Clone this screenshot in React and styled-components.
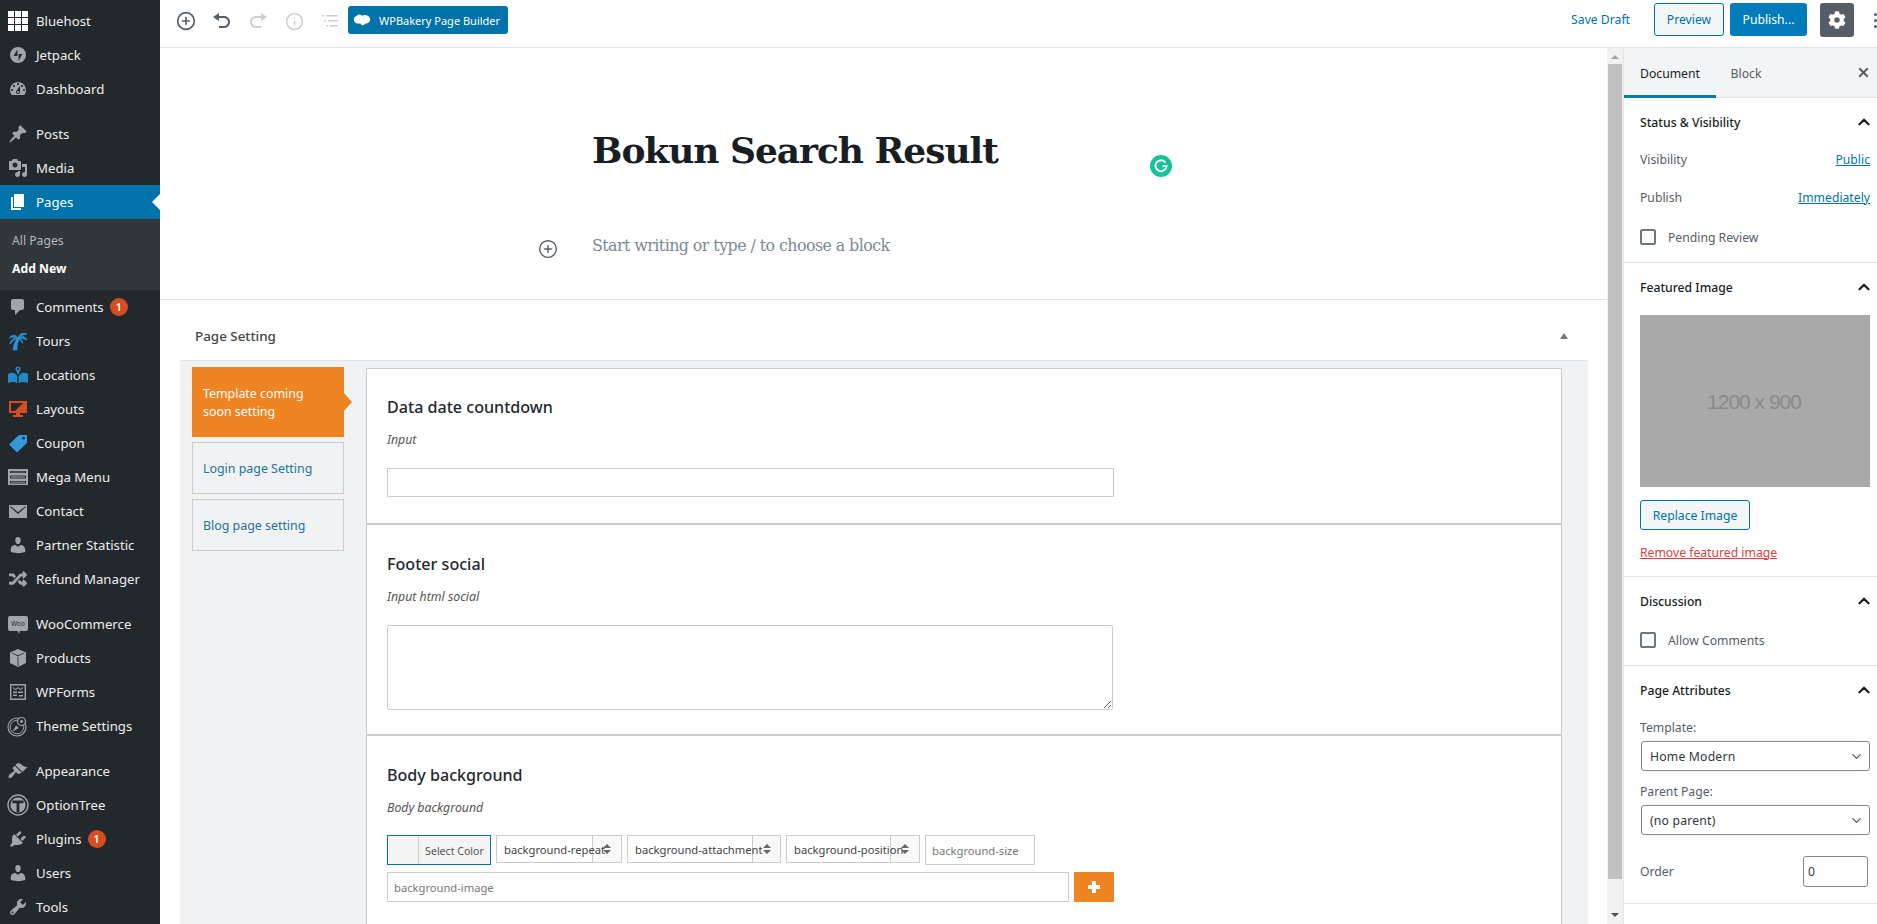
import React from "react";
import styled, { createGlobalStyle } from "styled-components";
import { CirclePlus, ChevronUp, ChevronDown, X, Info } from "lucide-react";
import { FaCog, FaRandom } from "react-icons/fa";

const Global = createGlobalStyle`
  html, body { margin: 0; padding: 0; height: 100%; overflow: hidden; background: #fff; }
  body { font-family: "Noto Sans", "Open Sans", sans-serif; font-size: 13px; color: #191e23; }
  * { box-sizing: border-box; }
`;

const Page = styled.div`display: flex; width: 1877px; height: 924px; overflow: hidden;`;
const Side = styled.nav`width: 160px; flex: none; background: #23282d; padding-top: 4px; display: flex; flex-direction: column;`;
const MenuItem = styled.div`
  position: relative; display: flex; align-items: center; gap: 8px; height: 34px; padding-left: 8px; flex: none;
  color: ${p => (p.$active ? "#fff" : "#eee")}; background: ${p => (p.$active ? "#0073aa" : "transparent")};
  font-size: 13.2px; margin-top: ${p => (p.$gap ? "11px" : "0")};
  ${p => p.$active && `&::after { content: ""; position: absolute; right: 0; top: 9px; border: 8px solid transparent; border-right-color: #fff; border-left-width: 0; }`}
`;
const MenuIcon = styled.svg`width: ${p => p.$size || 20}px; height: ${p => p.$size || 20}px; margin: 0 ${p => (p.$size ? (20 - p.$size) / 2 : 0)}px; flex: none; fill: ${p => p.$color || "#a0a5aa"}; stroke: ${p => p.$line || "none"}; stroke-width: ${p => (p.$line ? 0.7 : 0)}; display: block;`;
const Badge = styled.span`
  width: 18px; height: 18px; border-radius: 50%; background: #d54e21; color: #fff; font-size: 10.5px; font-weight: 600;
  display: flex; align-items: center; justify-content: center; margin-left: -2px;
`;
const SubMenu = styled.div`height: 71px; flex: none; background: #32373c; padding: 7px 0 0 12px;`;
const SubItem = styled.div`height: 28px; display: flex; align-items: center; font-size: 12.2px; color: ${p => (p.$strong ? "#fff" : "#b4b9be")}; font-weight: ${p => (p.$strong ? 700 : 400)};`;

const Main = styled.div`flex: 1; min-width: 0; display: flex; flex-direction: column;`;
const Top = styled.header`height: 48px; flex: none; border-bottom: 1px solid #e2e4e7; display: flex; align-items: flex-start; padding-left: 8px;`;
const ToolIcon = styled.span`
  width: 36px; height: 42px; flex: none; display: flex; align-items: center; justify-content: center;
  color: ${p => (p.$off ? "#ccd0d4" : "#555d66")};
`;
const Bakery = styled.div`
  margin: 6px 0 0 0; width: 160px; height: 28px; border-radius: 3px; background: #0073aa; color: #fff; font-size: 11px;
  display: flex; align-items: center; gap: 8px; padding-left: 5px;
`;
const TopRight = styled.div`margin-left: auto; display: flex; align-items: flex-start; padding-top: 3px; overflow: hidden;`;
const SaveDraft = styled.span`color: #0073aa; font-size: 12.2px; height: 33px; display: flex; align-items: center; margin-right: 24px;`;
const OutlineBtn = styled.div`
  display: flex; align-items: center; justify-content: center; height: ${p => p.$h || 33}px; width: ${p => p.$w}px; margin-top: ${p => p.$mt || 0}px;
  border: 1px solid #0073aa; border-radius: 3px; background: #f3f5f6; color: #0073aa; font-size: 12.2px;
`;
const PrimaryBtn = styled.div`
  display: flex; align-items: center; justify-content: center; width: 77px; height: 33px; margin: 0 13px 0 6px;
  border-radius: 3px; background: #007cba; color: #fff; font-size: 12.2px;
`;
const GearBtn = styled.div`width: 34px; height: 34px; border-radius: 3px; background: #555d66; color: #fff; display: flex; align-items: center; justify-content: center;`;
const Dots = styled.div`width: 23px; height: 34px; flex: none; display: flex; flex-direction: column; justify-content: center; gap: 3px; padding-left: 20px;`;
const Dot = styled.i`display: block; width: 3px; height: 3px; border-radius: 50%; background: #555d66;`;

const Work = styled.div`flex: 1; min-height: 0; display: flex;`;
const Editor = styled.main`flex: 1; min-width: 0; display: flex; flex-direction: column; overflow: hidden;`;
const TitleArea = styled.section`position: relative; height: 252px; flex: none; border-bottom: 1px solid #e2e4e7; padding: 77px 0 0 378px;`;
const Title = styled.h1`margin: 0 0 0 54px; font: 700 36px/50px "DejaVu Serif", serif; letter-spacing: -1.05px; color: #191e23; white-space: nowrap;`;
const Grammarly = styled.span`
  position: absolute; left: 990px; top: 107px; width: 22px; height: 22px; border-radius: 50%; background: #15c39a; color: #fff;
  display: flex; align-items: center; justify-content: center;
`;
const BlockRow = styled.div`display: flex; align-items: center; gap: 34px; margin-top: 58px; color: #555d66;`;
const Inserter = styled.span`display: flex; margin-top: 6px;`;
const Placeholder = styled.span`font: 400 15.9px/24px "DejaVu Serif", serif; letter-spacing: -.58px; color: #7e8993; white-space: nowrap;`;

const Meta = styled.section`margin: 0 19px 0 20px; display: flex; flex-direction: column; flex: 1; min-height: 0;`;
const MetaHead = styled.div`height: 60px; flex: none; display: flex; align-items: center; justify-content: space-between; padding: 11px 20px 0 15px; font-size: 13.4px; font-weight: 500; color: #444;`;
const Caret = styled.i`width: 0; height: 0; border: 4px solid transparent; border-top: 0; border-bottom: 6px solid #72777c;`;
const MetaBody = styled.div`flex: 1; min-height: 0; overflow: hidden; background: #f1f2f4; border-top: 1px solid #e2e4e7; display: flex; padding: 6px 26px 0 12px; gap: 22px;`;
const Tabs = styled.div`width: 152px; flex: none; display: flex; flex-direction: column; gap: 5px;`;
const TabItem = styled.div`
  position: relative; height: ${p => (p.$active ? "70px" : "52px")}; display: flex; align-items: center; padding: 2px 10px 0 ${p => (p.$active ? 11 : 10)}px; line-height: 18px; font-size: 12.4px;
  color: ${p => (p.$active ? "#fff" : "#21759b")}; background: ${p => (p.$active ? "#ef8422" : "transparent")};
  border: ${p => (p.$active ? "none" : "1px solid #ccc")};
  ${p => p.$active && `&::after { content: ""; position: absolute; left: 100%; top: 26px; border: 9px solid transparent; border-left: 8px solid #ef8422; border-right: 0; }`}
`;
const Fields = styled.div`flex: 1; min-width: 0; padding-top: 1px;`;
const Field = styled.div`background: #fff; border: 1px solid #ccc; padding: ${p => p.$pt}px 19px ${p => p.$pb}px 20px;`;
const FieldTitle = styled.h3`margin: 0; font-size: 16.1px; line-height: 22px; font-weight: 500; color: #23282d;`;
const FieldDesc = styled.p`margin: 13px 0 0; font-size: 12.3px; line-height: 18px; font-style: italic; color: #555;`;
const TextInput = styled.input`display: block; margin-top: 19px; width: 727px; height: 29px; border: 1px solid #ccc; background: #fff; padding: 0 5px;`;
const TextBox = styled.textarea`display: block; margin-top: 19px; width: 726px; height: 85px; border: 1px solid #ccc; border-radius: 2px; background: #fff; resize: both;`;
const BgRow = styled.div`display: flex; margin-top: ${p => p.$mt}px; gap: ${p => p.$gap}px; height: 30px;`;
const ColorPick = styled.div`width: 104px; border: 1px solid #0073aa; background: #f4f4f5; display: flex; font-size: 10.6px; color: #555;`;
const Swatch = styled.span`width: 31px; border-right: 1px solid #ccc;`;
const ColorLabel = styled.span`flex: 1; display: flex; align-items: center; justify-content: center; padding-top: 2px;`;
const FakeSelect = styled.div`
  position: relative; width: ${p => p.$w}px; height: 28px; border: 1px solid #ccc; background: #fff; font-size: 11.2px; color: #444;
  display: flex; align-items: center; padding-left: 7px; white-space: nowrap; overflow: hidden;
`;
const SelectText = styled.span`position: relative; z-index: 1;`;
const SelectEnd = styled.span`
  position: absolute; right: 0; top: 0; bottom: 0; width: ${p => p.$w}px; border-left: 1px solid #ccc; background: #f9f9f9;
  display: flex; align-items: center; padding-left: 10px;
`;
const Arrows = styled.svg`position: relative; z-index: 2; width: 8px; height: 10px; fill: #666; flex: none;`;
const BgInput = styled.input`
  width: ${p => p.$w}px; height: 30px; border: 1px solid #ccc; background: #fff; padding: 0 6px; font: 11.2px "Noto Sans", sans-serif;
  &::placeholder { color: #777; opacity: 1; }
`;
const AddBtn = styled.div`width: 40px; height: 30px; background: #ef8422; color: #fff; display: flex; align-items: center; justify-content: center;`;

const Scroll = styled.div`width: 16px; flex: none; background: #f1f1f1; display: flex; flex-direction: column; align-items: center;`;
const ScrollArrow = styled.i`
  flex: none; width: 0; height: 0; margin: ${p => p.$m}; border: 4px solid transparent;
  ${p => (p.$up ? "border-top: 0; border-bottom: 4px solid #a3a3a3;" : "border-bottom: 0; border-top: 4px solid #505050;")}
`;
const Thumb = styled.div`width: 14px; height: 815px; background: #c1c1c1; flex: none;`;

const Panel = styled.aside`width: 254px; flex: none; border-left: 1px solid #e2e4e7; overflow: hidden;`;
const PanelTabs = styled.div`height: 50px; background: #f3f4f5; border-bottom: 1px solid #e2e4e7; display: flex; align-items: stretch; padding-right: 6px;`;
const PanelTab = styled.div`
  width: ${p => p.$w}px; display: flex; align-items: center; justify-content: center; font-size: 12.2px; padding-top: 4px;
  color: ${p => (p.$active ? "#191e23" : "#555d66")}; margin-bottom: -1px;
  border-bottom: 3px solid ${p => (p.$active ? "#007cba" : "transparent")};
`;
const CloseWrap = styled.span`margin-left: auto; display: flex; align-items: center; color: #555d66;`;
const Sec = styled.section`padding: 13px 7px ${p => p.$pb}px 16px; border-bottom: 1px solid #e2e4e7;`;
const SecHead = styled.div`height: 22px; display: flex; align-items: center; justify-content: space-between; font-size: 12.2px; font-weight: 500; color: #191e23;`;
const Toggle = styled(ChevronUp)`margin-right: -3px;`;
const Row = styled.div`display: flex; align-items: center; justify-content: space-between; height: 20px; margin-top: ${p => p.$mt}px; font-size: 12.2px; color: #555d66;`;
const Link = styled.a`color: #0073aa; text-decoration: underline;`;
const CheckRow = styled.label`display: flex; align-items: center; gap: 12px; height: 20px; margin-top: ${p => p.$mt}px; font-size: 12.2px; color: #555d66;`;
const Check = styled.span`width: 16px; height: 16px; border: 2px solid #6c7781; border-radius: 2px; background: #fff; flex: none;`;
const Thumbnail = styled.div`
  margin-top: 17px; height: 172px; background: #a9a9a9; color: #8a8a8a; display: flex; align-items: center; justify-content: center;
  font: 21px "Liberation Sans", sans-serif; letter-spacing: -1px; padding: 2px 2px 0 0;
`;
const RemoveRow = styled.div`margin-top: 12px; height: 20px; display: flex; align-items: center; font-size: 12.2px;`;
const RemoveLink = styled.a`color: #dc4040; text-decoration: underline;`;
const Label = styled.div`height: 20px; margin-top: ${p => p.$mt}px; display: flex; align-items: center; font-size: 12.2px; color: #555d66;`;
const PanelSelect = styled.div`
  margin: 4px 0 0 1px; height: 30px; border: 1px solid #7e8993; border-radius: 3px; display: flex; align-items: center; justify-content: space-between;
  padding: 0 5px 0 8px; font-size: 12.2px; color: #32373c; letter-spacing: .2px;
`;
const OrderRow = styled.div`display: flex; align-items: center; justify-content: space-between; height: 31px; margin-top: 21px; padding-right: 2px; font-size: 12.2px; color: #555d66;`;
const OrderInput = styled.div`width: 65px; height: 31px; border: 1px solid #7e8993; border-radius: 3px; display: flex; align-items: center; padding-left: 4px; color: #32373c;`;

const Icon = ({ d, color, rule, line }) => (
  <MenuIcon viewBox="0 0 20 20" $color={color} $line={line}>
    <path d={d} fillRule={rule} />
  </MenuIcon>
);

const Grid = () => (
  <MenuIcon viewBox="0 0 20 20" $color="#fff">
    {[0, 7, 14].flatMap(y => [0, 7, 14].map(x => <rect key={`${x}-${y}`} x={x} y={y} width="6" height="6" />))}
  </MenuIcon>
);
const Jetpack = () => (
  <Icon rule="evenodd" d="M10 2a8 8 0 1 1 0 16a8 8 0 0 1 0-16zM9.5 4.2L5.6 11h3.9zM10.6 9v6.8L14.4 9z" />
);
const Palm = () => (
  <Icon color="#2b93d8" line="#2b93d8" d="M5 19C5.500 14 7 10 9.500 7L11.500 8C9.500 11 8.800 15 9 19ZM10 7C7.500 3 3.500 3.500 1.500 7C4 5.800 7 5.800 10 7ZM10 7C6 6.500 2.500 9 2 13C4 10 7 8 10 7ZM10 7C11 3 15 1 19 3C15 3.500 12.500 5 10 7ZM10 7C13 4.500 17.500 5 19 9C16 7.500 13 7 10 7ZM10 7C13 7.500 15 9.500 14.500 12.500C13.500 10 12 8.500 10 7Z" />
);
const Loc = () => (
  <Icon color="#2288c8" rule="evenodd" d="M10 1.500a2.600 2.600 0 0 1 2.600 2.600c0 1.600-1.600 3.200-2 5.200h-1.200c-.4-2-2-3.600-2-5.200A2.600 2.600 0 0 1 10 1.500zM10 3.100a1 1 0 1 0 0 2a1 1 0 0 0 0-2zM0 9C2.500 7.500 5 7.500 7 8.500L9.300 11V18C7 16.500 3 16.500 0 18ZM20 9C17.500 7.500 15 7.500 13 8.500L10.700 11V18C13 16.500 17 16.500 20 18Z" />
);
const Screen = () => (
  <Icon color="#d54e21" rule="evenodd" d="M1 2H19V14H12V16H15V18H5V16H8V14H1ZM3 4V12H7L15 4Z" />
);
const Tag = () => (
  <Icon color="#3498db" rule="evenodd" d="M11 2H19V10L9 19.500L1 11.500ZM15.500 3.800a1.400 1.400 0 1 0 0 2.800a1.400 1.400 0 0 0 0-2.800Z" />
);
const Mega = () => (
  <MenuIcon viewBox="0 0 20 20">
    <path fillRule="evenodd" d="M0 2H20V18H0ZM2 4V6H18V4ZM2 8.500V11.500H18V8.500ZM2 14V16.500H18V14Z" />
    <path d="M3 4.500H17V5.500H3ZM3 9H17V11H3ZM3 14.500H17V16H3Z" opacity=".55" />
  </MenuIcon>
);
const Mail = () => (
  <Icon rule="evenodd" d="M1 4H19V17H1ZM2.600 5.200L10 11.200L17.400 5.200L18 6L10 13L2 6Z" />
);
const WooIcon = () => (
  <MenuIcon viewBox="0 0 20 20">
    <rect x="0" y="2" width="20" height="15" rx="2" />
    <path d="M9 16L11 20L12 16Z" />
    <text x="10" y="12" fontSize="6.400" textAnchor="middle" fill="#23282d" fontFamily="Noto Sans">Woo</text>
  </MenuIcon>
);
const Box = () => (
  <Icon rule="evenodd" d="M10 1L18 4.500V15L10 19L2 15V4.500ZM3.600 5.200L10 8.200L16.400 5.200L16 4.800L10 7.300L4 4.800ZM9.600 8.800V18H10.400V8.800Z" />
);
const Forms = () => (
  <MenuIcon viewBox="0 0 20 20">
    <path fillRule="evenodd" d="M2 2H18V18H2ZM3.400 3.400V16.600H16.600V3.400Z" />
    <path d="M5 5L7.500 7L10 5L12.500 7L15 5V6.200L12.500 8.200L10 6.200L7.500 8.200L5 6.200ZM5 9.500H9V11H5ZM10 9.500H15V11H10ZM5 12.500H9V14H5ZM11 13H15V14.500H11Z" />
  </MenuIcon>
);
const Compass = () => (
  <MenuIcon viewBox="0 0 22 22" $size={22}>
    <circle cx="10" cy="12" r="9" fill="none" stroke="#a0a5aa" strokeWidth="1.200" />
    <circle cx="10" cy="12" r="6.800" fill="none" stroke="#a0a5aa" strokeWidth="1" />
    <path d="M5.500 16.500L9 10.500L12 13Z" />
    <circle cx="14.500" cy="6.500" r="4" fill="#23282d" stroke="#a0a5aa" strokeWidth="1.200" />
    <circle cx="14.500" cy="6.500" r="1.400" />
  </MenuIcon>
);
const Tree = () => (
  <MenuIcon viewBox="0 0 22 22" $size={22}>
    <circle cx="11" cy="11" r="10" fill="none" stroke="#a0a5aa" strokeWidth="1.400" />
    <circle cx="11" cy="11" r="7.600" />
    <path d="M5.500 6.500H16.500V9.200H12.400V18H9.600V9.200H5.500Z" fill="#23282d" />
  </MenuIcon>
);

const dash = {
  dashboard: "M3.76 16h12.48c1.1-1.37 1.76-3.11 1.76-5 0-4.42-3.58-8-8-8s-8 3.58-8 8c0 1.89.66 3.63 1.76 5zM10 4c.55 0 1 .45 1 1s-.45 1-1 1-1-.45-1-1 .45-1 1-1zM6 6c.55 0 1 .45 1 1s-.45 1-1 1-1-.45-1-1 .45-1 1-1zm8 0c.55 0 1 .45 1 1s-.45 1-1 1-1-.45-1-1 .45-1 1-1zm-5.37 5.55L12 7v6c0 1.1-.9 2-2 2s-2-.9-2-2c0-.57.24-1.08.63-1.45zM4 10c.55 0 1 .45 1 1s-.45 1-1 1-1-.45-1-1 .45-1 1-1zm12 0c.55 0 1 .45 1 1s-.45 1-1 1-1-.45-1-1 .45-1 1-1zm-5 3c0-.55-.45-1-1-1s-1 .45-1 1 .45 1 1 1 1-.45 1-1z",
  post: "M10.44 3.02l1.82-1.82 6.36 6.35-1.83 1.82c-1.05-.68-2.48-.57-3.41.36l-.75.75c-.92.93-1.04 2.35-.35 3.41l-1.83 1.82-2.41-2.41-2.8 2.79c-.42.42-3.38 2.71-3.8 2.29s1.86-3.39 2.28-3.81l2.79-2.79L4.1 9.36l1.83-1.82c1.05.69 2.48.57 3.4-.36l.75-.75c.93-.92 1.05-2.35.36-3.41z",
  media: "M13 11V4c0-.55-.45-1-1-1h-1.67L9 1H5L3.67 3H2c-.55 0-1 .45-1 1v7c0 .55.45 1 1 1h10c.55 0 1-.45 1-1zM7 4.5c1.38 0 2.5 1.12 2.5 2.5S8.38 9.5 7 9.5 4.5 8.38 4.5 7 5.62 4.5 7 4.5zM14 6h5v10.5c0 1.38-1.12 2.5-2.5 2.5S14 17.88 14 16.5s1.12-2.5 2.5-2.5c.17 0 .34.02.5.05V9h-3V6zm-4 8.05V13h2v3.5c0 1.38-1.12 2.5-2.5 2.5S7 17.88 7 16.5 8.12 14 9.5 14c.17 0 .34.02.5.05z",
  page: "M6 15V2h10v13H6zm-1 1h8v2H3V5h2v11z",
  comments: "M5 2h9c1.1 0 2 .9 2 2v7c0 1.1-.9 2-2 2h-2l-5 5v-5H5c-1.1 0-2-.9-2-2V4c0-1.1.9-2 2-2z",
  users: "M10 9.25c-2.27 0-2.73-3.44-2.73-3.44C7 4.02 7.82 2 9.97 2c2.16 0 2.98 2.02 2.71 3.81 0 0-.41 3.44-2.68 3.44zm0 2.57L12.72 10c2.39 0 4.52 2.33 4.52 4.53v2.49s-3.65 1.13-7.24 1.13c-3.65 0-7.24-1.13-7.24-1.13v-2.49c0-2.25 1.94-4.48 4.47-4.48z",
  brush: "M14.48 11.06L7.41 3.99l1.5-1.5c.5-.56 2.3-.47 3.51.32 1.21.8 1.43 1.28 2.91 2.1 1.18.64 2.45 1.26 4.45.85zM13.77 11.77L6.7 4.7 4.93 6.47c-.39.39-.39 1.02 0 1.41l1.06 1.06c.39.39.39 1.02 0 1.41-.6.6-3.4 2.1-4.4 3.1-1 1-1.4 2.6-.7 3.3s2.3.3 3.3-.7c1-1 2.5-3.8 3.1-4.4.39-.39 1.02-.39 1.41 0l1.06 1.06c.39.39 1.02.39 1.41 0z",
  plugin: "M13.11 4.36L9.87 7.6 8 5.73l3.24-3.24c.35-.34 1.05-.2 1.56.32.52.51.66 1.21.31 1.55zm-8 1.77l.91-1.12 9.01 9.01-1.19.84c-.71.71-2.63 1.16-3.82 1.16H6.14L4.9 17.26c-.59.59-1.54.59-2.12 0-.59-.58-.59-1.53 0-2.12l1.24-1.24v-3.88c0-1.13.4-3.19 1.09-3.89zm7.26 3.97l3.24-3.24c.34-.35 1.04-.21 1.55.31.52.51.66 1.21.31 1.55l-3.24 3.25z",
  tools: "M16.68 9.77c-1.34 1.34-3.3 1.67-4.95.99l-5.41 6.52c-.99.99-2.59.99-3.58 0s-.99-2.59 0-3.57l6.52-5.42c-.68-1.65-.35-3.61.99-4.95 1.28-1.28 3.12-1.62 4.72-1.06l-2.89 2.89 2.82 2.82 2.86-2.87c.53 1.58.18 3.39-1.08 4.65zM3.81 16.21c.4.39 1.04.39 1.43 0 .4-.4.4-1.04 0-1.43-.39-.4-1.03-.4-1.43 0-.39.39-.39 1.03 0 1.43z",
  undo: "M12 5H7V2L1 6l6 4V7h5c2.2 0 4 1.8 4 4s-1.8 4-4 4H7v2h5c3.3 0 6-2.7 6-6s-2.7-6-6-6z",
  redo: "M8 5h5V2l6 4-6 4V7H8c-2.2 0-4 1.8-4 4s1.8 4 4 4h5v2H8c-3.3 0-6-2.7-6-6s2.7-6 6-6z",
};

const UpDown = () => (
  <Arrows viewBox="0 0 8 10"><path d="M4 0L8 4H0ZM0 6H8L4 10Z" /></Arrows>
);

export default function App() {
  return (
    <Page>
      <Global />
      <Side>
        <MenuItem><Grid />Bluehost</MenuItem>
        <MenuItem><Jetpack />Jetpack</MenuItem>
        <MenuItem><Icon d={dash.dashboard} />Dashboard</MenuItem>
        <MenuItem $gap><Icon d={dash.post} />Posts</MenuItem>
        <MenuItem><Icon d={dash.media} />Media</MenuItem>
        <MenuItem $active><Icon color="#fff" d={dash.page} />Pages</MenuItem>
        <SubMenu>
          <SubItem>All Pages</SubItem>
          <SubItem $strong>Add New</SubItem>
        </SubMenu>
        <MenuItem><Icon d={dash.comments} />Comments<Badge>1</Badge></MenuItem>
        <MenuItem><Palm />Tours</MenuItem>
        <MenuItem><Loc />Locations</MenuItem>
        <MenuItem><Screen />Layouts</MenuItem>
        <MenuItem><Tag />Coupon</MenuItem>
        <MenuItem><Mega />Mega Menu</MenuItem>
        <MenuItem><Mail />Contact</MenuItem>
        <MenuItem><Icon d={dash.users} />Partner Statistic</MenuItem>
        <MenuItem><MenuIcon as={FaRandom} $size={18} />Refund Manager</MenuItem>
        <MenuItem $gap><WooIcon />WooCommerce</MenuItem>
        <MenuItem><Box />Products</MenuItem>
        <MenuItem><Forms />WPForms</MenuItem>
        <MenuItem><Compass />Theme Settings</MenuItem>
        <MenuItem $gap><Icon d={dash.brush} />Appearance</MenuItem>
        <MenuItem><Tree />OptionTree</MenuItem>
        <MenuItem><Icon d={dash.plugin} />Plugins<Badge>1</Badge></MenuItem>
        <MenuItem><Icon d={dash.users} />Users</MenuItem>
        <MenuItem><Icon d={dash.tools} />Tools</MenuItem>
      </Side>

      <Main>
        <Top>
          <ToolIcon><CirclePlus size={20} strokeWidth={2} /></ToolIcon>
          <ToolIcon><svg width="20" height="20" viewBox="0 0 20 20" fill="currentColor"><path d={dash.undo} /></svg></ToolIcon>
          <ToolIcon $off><svg width="20" height="20" viewBox="0 0 20 20" fill="currentColor"><path d={dash.redo} /></svg></ToolIcon>
          <ToolIcon $off><Info size={19} strokeWidth={2} /></ToolIcon>
          <ToolIcon $off>
            <svg width="18" height="18" viewBox="0 0 18 18" fill="currentColor"><path d="M1 3h2v1.500H1zM5 3h12v1.500H5zM3 8h2v1.500H3zM7 8h10v1.500H7zM5 13h2v1.500H5zM9 13h8v1.500H9z" /></svg>
          </ToolIcon>
          <Bakery>
            <svg width="18" height="13" viewBox="0 0 16 12" fill="#fff"><path d="M3 1.500C5 0 7 .5 8 1.500 10 .6 13 1 14.500 2.500c1.500 1.500 1.500 4-.5 5.500-1.500 1-3 .5-3.500 1.500-1 1.500-3 1-3.500 0C6 8 4 9.500 2 8 .5 7 0 5 .8 3.500 1.200 2.700 2 2 3 1.500Z" /></svg>
            WPBakery Page Builder
          </Bakery>
          <TopRight>
            <SaveDraft>Save Draft</SaveDraft>
            <OutlineBtn $w={70}>Preview</OutlineBtn>
            <PrimaryBtn>Publish...</PrimaryBtn>
            <GearBtn><FaCog size={18} /></GearBtn>
            <Dots><Dot /><Dot /><Dot /></Dots>
          </TopRight>
        </Top>
        <Work>
          <Editor>
            <TitleArea>
              <Title>Bokun Search Result</Title>
              <Grammarly>
                <svg width="14" height="14" viewBox="0 0 14 14" fill="none" stroke="#fff" strokeWidth="1.900"><path d="M11.500 3.500A5.500 5.500 0 1 0 12.500 7H8.500" /></svg>
              </Grammarly>
              <BlockRow>
                <Inserter><CirclePlus size={20} strokeWidth={1.7} /></Inserter>
                <Placeholder>Start writing or type / to choose a block</Placeholder>
              </BlockRow>
            </TitleArea>
            <Meta>
              <MetaHead>Page Setting<Caret /></MetaHead>
              <MetaBody>
                <Tabs>
                  <TabItem $active>Template coming soon setting</TabItem>
                  <TabItem>Login page Setting</TabItem>
                  <TabItem>Blog page setting</TabItem>
                </Tabs>
                <Fields>
                  <Field $pt={27} $pb={26}>
                    <FieldTitle>Data date countdown</FieldTitle>
                    <FieldDesc>Input</FieldDesc>
                    <TextInput />
                  </Field>
                  <Field $pt={28} $pb={24}>
                    <FieldTitle>Footer social</FieldTitle>
                    <FieldDesc>Input html social</FieldDesc>
                    <TextBox />
                  </Field>
                  <Field $pt={28} $pb={26}>
                    <FieldTitle>Body background</FieldTitle>
                    <FieldDesc>Body background</FieldDesc>
                    <BgRow $mt={18} $gap={5}>
                      <ColorPick><Swatch /><ColorLabel>Select Color</ColorLabel></ColorPick>
                      <FakeSelect $w={126}><SelectText>background-repeat</SelectText><SelectEnd $w={29}><UpDown /></SelectEnd></FakeSelect>
                      <FakeSelect $w={154}><SelectText>background-attachment</SelectText><SelectEnd $w={28}><UpDown /></SelectEnd></FakeSelect>
                      <FakeSelect $w={134}><SelectText>background-position</SelectText><SelectEnd $w={29}><UpDown /></SelectEnd></FakeSelect>
                      <BgInput $w={110} placeholder="background-size" />
                    </BgRow>
                    <BgRow $mt={7} $gap={5}>
                      <BgInput $w={682} placeholder="background-image" />
                      <AddBtn>
                        <svg width="12" height="12" viewBox="0 0 12 12" fill="#fff"><path d="M4 0H8V4H12V8H8V12H4V8H0V4H4Z" /></svg>
                      </AddBtn>
                    </BgRow>
                  </Field>
                </Fields>
              </MetaBody>
            </Meta>
          </Editor>

          <Scroll>
            <ScrollArrow $up $m="7px 0 5px" />
            <Thumb />
            <ScrollArrow $m="34px 0 0" />
          </Scroll>

          <Panel>
            <PanelTabs>
              <PanelTab $active $w={92}>Document</PanelTab>
              <PanelTab $w={60}>Block</PanelTab>
              <CloseWrap><X size={15} strokeWidth={3} /></CloseWrap>
            </PanelTabs>
            <Sec $pb={15}>
              <SecHead>Status &amp; Visibility<Toggle size={18} strokeWidth={3} /></SecHead>
              <Row $mt={16}>Visibility<Link>Public</Link></Row>
              <Row $mt={18}>Publish<Link>Immediately</Link></Row>
              <CheckRow $mt={20}><Check />Pending Review</CheckRow>
            </Sec>
            <Sec $pb={14}>
              <SecHead>Featured Image<Toggle size={18} strokeWidth={3} /></SecHead>
              <Thumbnail>1200 x 900</Thumbnail>
              <OutlineBtn $w={110} $h={30} $mt={13}>Replace Image</OutlineBtn>
              <RemoveRow><RemoveLink>Remove featured image</RemoveLink></RemoveRow>
            </Sec>
            <Sec $pb={15}>
              <SecHead>Discussion<Toggle size={18} strokeWidth={3} /></SecHead>
              <CheckRow $mt={18}><Check />Allow Comments</CheckRow>
            </Sec>
            <Sec $pb={16}>
              <SecHead>Page Attributes<Toggle size={18} strokeWidth={3} /></SecHead>
              <Label $mt={16}>Template:</Label>
              <PanelSelect>Home Modern<ChevronDown size={15} strokeWidth={2} color="#555d66" /></PanelSelect>
              <Label $mt={10}>Parent Page:</Label>
              <PanelSelect>(no parent)<ChevronDown size={15} strokeWidth={2} color="#555d66" /></PanelSelect>
              <OrderRow>Order<OrderInput>0</OrderInput></OrderRow>
            </Sec>
          </Panel>
        </Work>
      </Main>
    </Page>
  );
}
